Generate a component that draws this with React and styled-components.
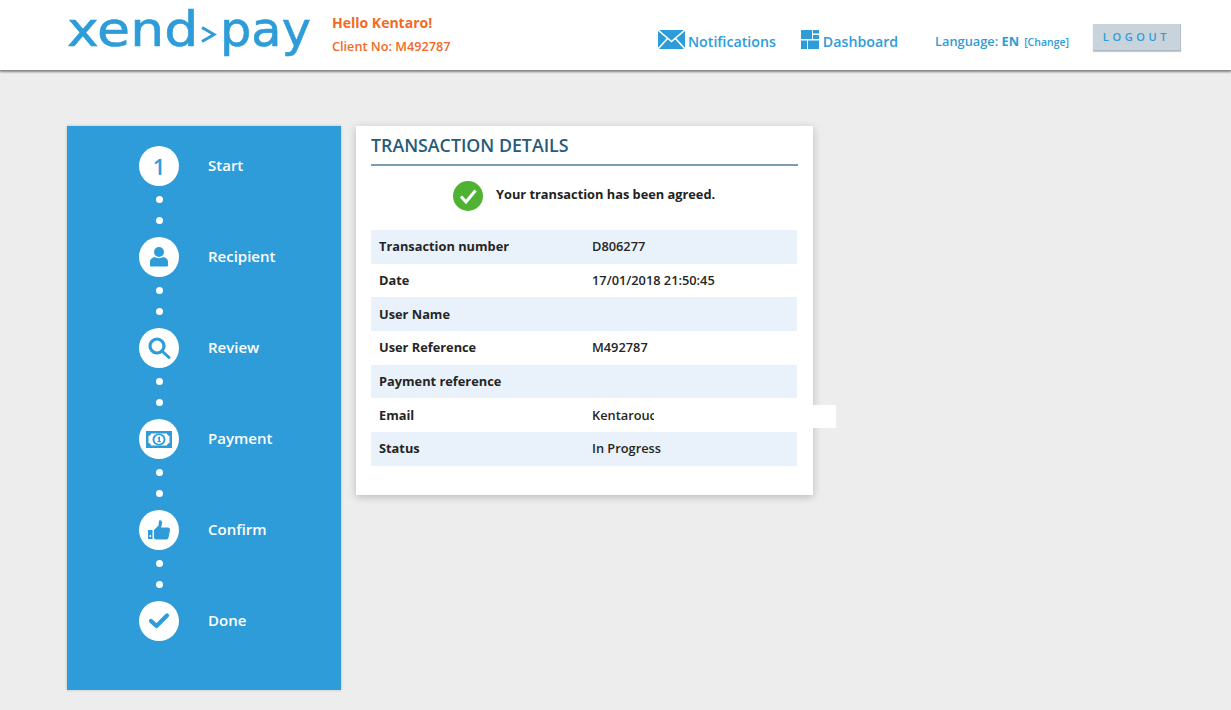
import React from "react";
import styled, { createGlobalStyle } from "styled-components";

const Global = createGlobalStyle`
  html, body { margin: 0; padding: 0; background: #ededed; }
  body { font-family: "Open Sans", "Liberation Sans", sans-serif; -webkit-font-smoothing: antialiased; }
`;
const BLUE = "#2e9cd8";

const Page = styled.div`
  width: 1231px; height: 710px; overflow: hidden; background: #ededed;
`;
const Header = styled.header`
  height: 70px; background: #fff; display: flex; align-items: stretch;
  border-bottom: 1px solid #8c8c8c; box-shadow: 0 1px 2px rgba(0,0,0,.45);
  padding: 0 50px 0 67px;
`;
const Logo = styled.div`
  display: flex; align-items: flex-start; width: 265px; height: 70px; color: ${BLUE};
  font-family: "DejaVu Sans", sans-serif; font-weight: 400; font-size: 47.5px; line-height: 64px;
`;
const LogoWord = styled.span`
  display: inline-block; margin-top: -2px; transform-origin: left center;
  transform: scaleX(${p => p.$sx}); -webkit-text-stroke: 0.6px ${BLUE};
`;
const LogoChevron = styled.svg`
  width: 17px; height: 17px; margin: 26px 3px 0 17px; flex: none;
`;
const Greeting = styled.div`
  display: flex; flex-direction: column; gap: 5px; padding-top: 13px; color: #f26a25;
  font-size: 12.7px; font-weight: 600; line-height: 19px;
`;
const Hello = styled.div`font-size: 14px; font-weight: 700;`;
const Nav = styled.nav`
  margin-left: auto; display: flex; align-items: flex-start; color: ${BLUE};
`;
const NavItem = styled.div`
  display: flex; align-items: flex-start; font-size: 14.2px; font-weight: 600; line-height: 20px;
  padding-top: 32px; margin-right: ${p => p.$mr}px;
`;
const NavIcon = styled.svg`
  flex: none; margin-top: -2px; margin-right: ${p => p.$mr}px;
`;
const Language = styled.div`
  font-size: 12.8px; font-weight: 600; padding-top: 32px; line-height: 19px; margin-right: 24px;
  b { font-weight: 700; }
`;
const Change = styled.span`font-size: 10.5px; margin-left: 5px;`;
const Logout = styled.button`
  width: 88px; height: 27px; margin-top: 24px; border: 0; padding: 0 0 2px; background: #c8d3dc;
  border-bottom: 1px solid #aab6c0; border-right: 1px solid #b6c2cc; box-shadow: 0 1px 1px rgba(0,0,0,.2);
  color: ${BLUE}; font: 600 11px "Open Sans", sans-serif; letter-spacing: 3.6px;
`;
const Main = styled.main`
  display: flex; align-items: flex-start; gap: 15px; padding: 55px 0 0 67px;
`;
const Sidebar = styled.aside`
  width: 274px; height: 564px; background: ${BLUE}; box-sizing: border-box; padding: 20px 0 0 72px;
  box-shadow: 0 0 3px rgba(0,0,0,.2); display: flex; flex-direction: column;
`;
const Step = styled.div`
  display: flex; align-items: center; gap: 29px; height: 40px;
`;
const Circle = styled.div`
  width: 40px; height: 40px; border-radius: 50%; background: #fff; flex: none;
  display: flex; align-items: center; justify-content: center; color: ${BLUE};
  font-size: 22px; font-weight: 600;
`;
const StepLabel = styled.span`
  color: #fff; font-size: 15px; font-weight: 600; line-height: 20px; margin-top: -3px;
`;
const Dots = styled.div`
  width: 40px; height: 51px; display: flex; flex-direction: column; align-items: center;
  gap: 14px; padding-top: 10px; box-sizing: border-box;
`;
const Dot = styled.i`
  display: block; width: 7px; height: 7px; border-radius: 50%; background: #fff;
`;
const Card = styled.section`
  position: relative; width: 457px; height: 369px; background: #fff; box-sizing: border-box;
  padding: 0 15px 0 15px; box-shadow: 0 2px 8px rgba(0,0,0,.22);
`;
const Title = styled.h2`
  margin: 0; height: 40px; box-sizing: border-box; padding-top: 7px; font-size: 17.8px; line-height: 24px;
  font-weight: 600; color: #265b7b; border-bottom: 2px solid #7b9db2;
`;
const Message = styled.div`
  display: flex; align-items: center; justify-content: flex-start; gap: 13px; padding: 0 0 4px 82px; height: 64px;
  box-sizing: border-box; font-size: 12.8px; font-weight: 700; color: #222;
`;
const MessageText = styled.span`margin-top: -5px;`;
const Table = styled.div`display: flex; flex-direction: column;`;
const Row = styled.div`
  height: 33.7px; display: flex; align-items: center; padding: 0 0 1px 8px; font-size: 12.8px; color: #252525;
  background: ${p => (p.$shaded ? "#e9f2fb" : "#fff")}; width: 426px; box-sizing: border-box;
`;
const Key = styled.span`width: 213px; font-weight: 700; flex: none;`;
const Value = styled.span`
  font-weight: 600; white-space: nowrap;
`;
const Clipped = styled(Value)`
  display: block; width: 62px; overflow: hidden;
`;
const Patch = styled.div`
  position: absolute; left: 457px; top: 279px; width: 23px; height: 23px; background: #fff;
`;

const Envelope = () => (
  <NavIcon $mr={3} width="27" height="19" viewBox="0 0 27 19">
    <rect width="27" height="19" fill={BLUE} />
    <path d="M0 0L13.5 11.5L27 0M0 19L9.5 8.5M27 19L17.5 8.5" fill="none" stroke="#fff" strokeWidth="1.6" />
  </NavIcon>
);
const Blocks = () => (
  <NavIcon $mr={4} width="18" height="19" viewBox="0 0 18 19" fill={BLUE}>
    <rect x="0" y="0" width="11" height="9" />
    <rect x="12" y="0" width="6" height="3.5" />
    <rect x="12" y="5" width="6" height="4" />
    <rect x="0" y="10.5" width="6" height="8.5" />
    <rect x="7" y="10.5" width="11" height="8.5" />
  </NavIcon>
);
const Person = () => (
  <svg width="20" height="22" viewBox="0 0 20 22" fill={BLUE}>
    <circle cx="10" cy="6" r="5" />
    <path d="M1 19.5V15.5C1 13 3.5 11.5 6 11C7 12.5 13 12.5 14 11C16.5 11.5 19 13 19 15.5V19.5C19 20.3 18.3 20.5 17.5 20.5H2.5C1.7 20.5 1 20.3 1 19.5Z" />
  </svg>
);
const Search = () => (
  <svg width="24" height="24" viewBox="0 0 24 24" fill="none" stroke={BLUE}>
    <circle cx="10" cy="10" r="7" strokeWidth="3.2" />
    <path d="M15.5 15.5L22 21.5" strokeWidth="3" strokeLinecap="round" />
  </svg>
);
const Bill = () => (
  <svg width="26" height="17" viewBox="0 0 26 17">
    <rect width="26" height="17" fill={BLUE} />
    <path d="M5 2.5H21C21.3 4 22 4.7 23.5 5V12C22 12.3 21.3 13 21 14.5H5C4.7 13 4 12.3 2.5 12V5C4 4.7 4.7 4 5 2.5Z" fill="#fff" />
    <ellipse cx="13" cy="8.5" rx="6.5" ry="6" fill={BLUE} />
    <ellipse cx="13" cy="8.5" rx="4.6" ry="4.4" fill="#fff" />
    <path d="M12.2 6L14 5.6V10.2H15V11.2H11.4V10.2H12.4V7.2L11.6 7.4Z" fill={BLUE} />
  </svg>
);
const Thumb = () => (
  <svg width="22" height="20" viewBox="0 0 22 20" fill={BLUE}>
    <path fillRule="evenodd" d="M0 10H4.5V19H0ZM1.6 15V17H3V15Z" />
    <path d="M6 10L10.5 5.5L11 1C11 0 13.5 -.5 14 2C14.3 3.5 13.5 6 13 7.5H20C21.8 7.5 22 9 22 10L20.5 17.5C20.2 19 19 19.5 18 19.5H9C7.5 19.5 7 18.8 6 18.5Z" />
  </svg>
);
const Tick = () => (
  <svg width="22" height="18" viewBox="0 0 22 18" fill="none" stroke={BLUE} strokeWidth="4.2" strokeLinecap="round" strokeLinejoin="round">
    <path d="M3 9L8.5 14L19 3.5" />
  </svg>
);
const GreenCheck = () => (
  <svg width="30" height="30" viewBox="0 0 30 30" style={{ flex: "none" }}>
    <circle cx="15" cy="15" r="15" fill="#4fb233" />
    <path d="M8 15.5L13 21L22.5 9.5" fill="none" stroke="#fff" strokeWidth="3" />
  </svg>
);

const steps = [
  ["Start", "1"],
  ["Recipient", <Person />],
  ["Review", <Search />],
  ["Payment", <Bill />],
  ["Confirm", <Thumb />],
  ["Done", <Tick />],
];
const rows = [
  ["Transaction number", "D806277"],
  ["Date", "17/01/2018 21:50:45"],
  ["User Name", ""],
  ["User Reference", "M492787"],
  ["Payment reference", ""],
  ["Email", "Kentaroucchi", true],
  ["Status", "In Progress"],
];

export default function App() {
  return (
    <Page>
      <Global />
      <Header>
        <Logo>
          <LogoWord $sx={1.13}>xend</LogoWord>
          <LogoChevron viewBox="0 0 17 17">
            <path d="M2 1.5L14 8.5L2 15.5" fill="none" stroke={BLUE} strokeWidth="3" />
          </LogoChevron>
          <LogoWord $sx={1.04}>pay</LogoWord>
        </Logo>
        <Greeting>
          <Hello>Hello Kentaro!</Hello>
          <div>Client No: M492787</div>
        </Greeting>
        <Nav>
          <NavItem $mr={25}><Envelope />Notifications</NavItem>
          <NavItem $mr={37}><Blocks />Dashboard</NavItem>
          <Language>Language: <b>EN</b><Change>[Change]</Change></Language>
          <Logout>LOGOUT</Logout>
        </Nav>
      </Header>
      <Main>
        <Sidebar>
          {steps.map(([label, icon], i) => (
            <React.Fragment key={label}>
              <Step>
                <Circle>{icon}</Circle>
                <StepLabel>{label}</StepLabel>
              </Step>
              {i < steps.length - 1 && <Dots><Dot /><Dot /></Dots>}
            </React.Fragment>
          ))}
        </Sidebar>
        <Card>
          <Title>TRANSACTION DETAILS</Title>
          <Message>
            <GreenCheck />
            <MessageText>Your transaction has been agreed.</MessageText>
          </Message>
          <Table>
            {rows.map(([k, v, clip], i) => (
              <Row key={k} $shaded={i % 2 === 0}>
                <Key>{k}</Key>
                {clip ? <Clipped>{v}</Clipped> : <Value>{v}</Value>}
              </Row>
            ))}
          </Table>
          <Patch />
        </Card>
      </Main>
    </Page>
  );
}
